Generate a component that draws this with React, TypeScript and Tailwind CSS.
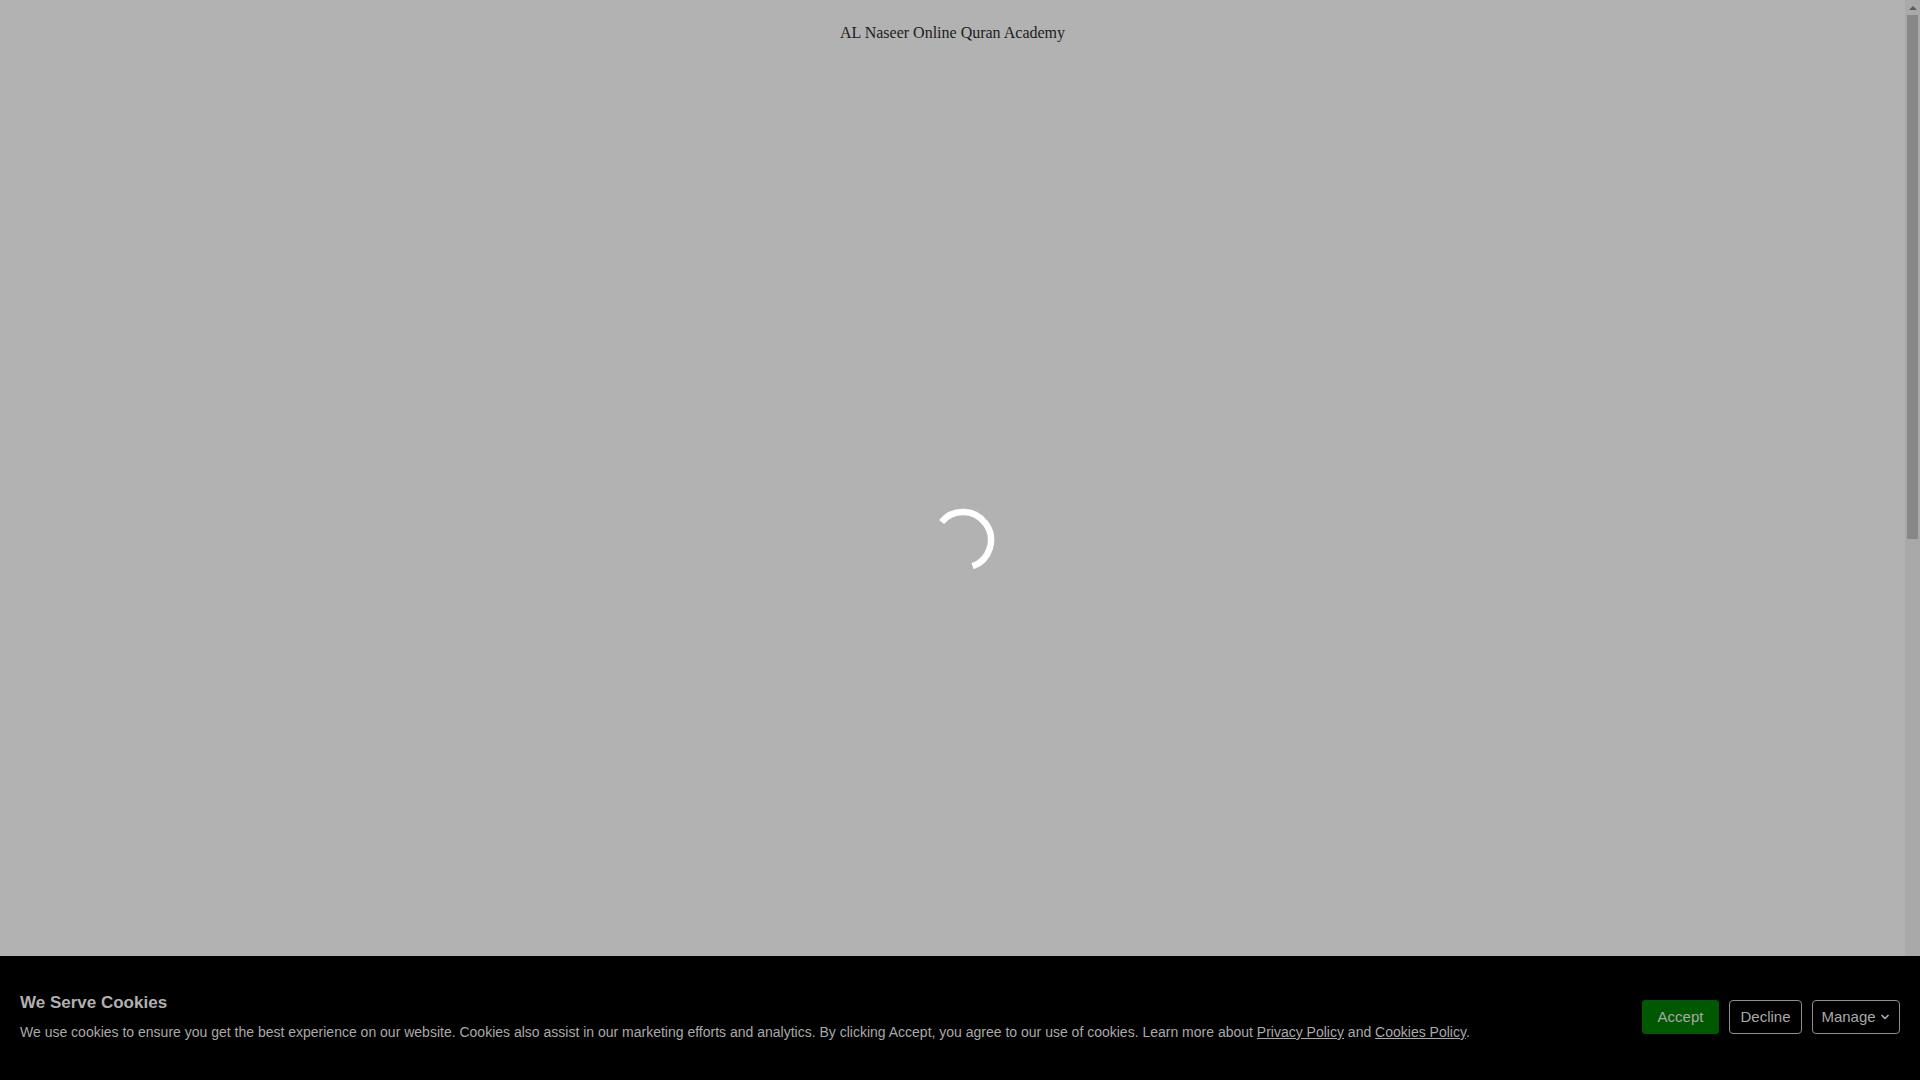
import { ChevronDown } from 'lucide-react'

function Spinner() {
  return (
    <svg width="64" height="64" viewBox="0 0 64 64" aria-label="Loading">
      <path
        d="M 10.55 14.0 A 28 28 0 1 1 41.58 58.31"
        fill="none"
        stroke="#ffffff"
        strokeWidth="6.5"
      />
    </svg>
  )
}

function FakeScrollbar() {
  return (
    <div className="flex w-[15px] shrink-0 flex-col bg-[#a9a9a9]">
      <div className="flex h-[15px] items-center justify-center">
        <div className="h-0 w-0 border-x-[4px] border-b-[4px] border-x-transparent border-b-[#5c5c5c]" />
      </div>
      <div className="ml-[2px] h-[524px] w-[11px] bg-[#878787]" />
    </div>
  )
}

function CookieBar() {
  return (
    <section
      aria-label="Cookie consent"
      className="flex h-[124px] shrink-0 items-center justify-between bg-black px-[20px] pb-[2px]"
    >
      <div>
        <h2 className="mb-[9px] text-[17px] font-bold leading-[21px] text-[#b0b0b0]">
          We Serve Cookies
        </h2>
        <p className="text-[14px] leading-[20px] text-[#a9a9a9]">
          We use cookies to ensure you get the best experience on our website. Cookies also assist in
          our marketing efforts and analytics. By clicking Accept, you agree to our use of cookies.
          Learn more about{' '}
          <a href="#" className="underline">
            Privacy Policy
          </a>{' '}
          and{' '}
          <a href="#" className="underline">
            Cookies Policy
          </a>
          .
        </p>
      </div>
      <div className="flex items-center gap-[10px]">
        <button
          type="button"
          className="h-[34px] w-[77px] rounded-[3px] bg-[#005800] text-[15px] text-[#a9a9a9]"
        >
          Accept
        </button>
        <button
          type="button"
          className="h-[34px] w-[73px] rounded-[4px] border border-[#8e8e8e] text-[15px] text-[#a9a9a9]"
        >
          Decline
        </button>
        <button
          type="button"
          className="flex h-[34px] w-[88px] items-center justify-center gap-[3px] rounded-[4px] border border-[#8e8e8e] text-[15px] text-[#a9a9a9]"
        >
          Manage
          <ChevronDown size={12} strokeWidth={3.5} />
        </button>
      </div>
    </section>
  )
}

export default function App() {
  return (
    <div
      className="relative flex h-screen w-full flex-col overflow-hidden bg-[#b2b2b2]"
      style={{ fontFamily: '"Liberation Sans", Arial, sans-serif' }}
    >
      <div className="flex min-h-0 flex-1">
        <main className="flex-1 pt-[22px] text-center">
          <h1
            className="text-[16px] leading-[22px] text-[#1c1c1c]"
            style={{ fontFamily: '"Liberation Serif", "Times New Roman", serif' }}
          >
            AL Naseer Online Quran Academy
          </h1>
        </main>
        <FakeScrollbar />
      </div>
      <CookieBar />
      <div className="pointer-events-none absolute inset-0 flex items-center justify-center pl-[6px]">
        <Spinner />
      </div>
    </div>
  )
}
